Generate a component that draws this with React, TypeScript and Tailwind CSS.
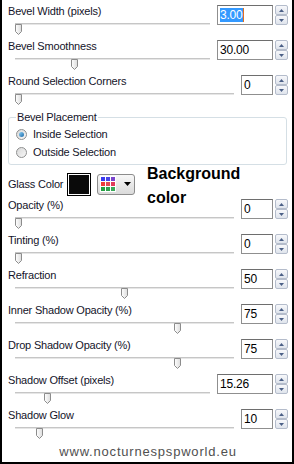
import React from 'react';

type RowProps = {
  label: string;
  value: string;
  frac: number;
  wide?: boolean;
  selected?: boolean;
};

function Thumb() {
  return (
    <svg width="7" height="11" viewBox="0 0 7 11">
      <defs>
        <linearGradient id="thumbFill" x1="0" y1="0" x2="1" y2="0">
          <stop offset="0" stopColor="#ffffff" />
          <stop offset="1" stopColor="#dcdcdc" />
        </linearGradient>
      </defs>
      <path d="M0.5 0.5 H6.5 V7.5 L3.5 10.5 L0.5 7.5 Z" fill="url(#thumbFill)" stroke="#8c8c8c" />
    </svg>
  );
}

function Slider({ frac }: { frac: number }) {
  return (
    <div className="relative ml-[7px] h-[12px]">
      <div className="mt-[5px] h-[2px] bg-[#c6c6c6] border-b border-[#e6e6e6]" />
      <div className="absolute top-[1px]" style={{ left: `calc(${frac} * (100% - 7px))` }}>
        <Thumb />
      </div>
    </div>
  );
}

function SpinArrow({ up }: { up?: boolean }) {
  return (
    <div className="flex-1 flex items-center justify-center rounded-[2px] border border-[#b4bccb] bg-gradient-to-b from-[#f7f8fb] to-[#dfe4ec]">
      <svg width="5" height="3" viewBox="0 0 5 3">
        <path d={up ? 'M0 3 L2.5 0 L5 3 Z' : 'M0 0 L2.5 3 L5 0 Z'} fill="#4a5f86" />
      </svg>
    </div>
  );
}

function SpinBox({ value, wide, selected }: { value: string; wide?: boolean; selected?: boolean }) {
  return (
    <div className="ml-[7px] mt-[1px] flex h-[20px] gap-[2px]">
      <div
        className={`flex items-center border border-[#8f8f8f] border-t-[#6e6e6e] bg-white pl-[2px] text-[12px] text-black ${
          wide ? 'w-[56px]' : 'w-[32px]'
        }`}
      >
        {selected ? (
          <>
            <span className="bg-[#3399ff] text-white leading-[14px]">{value}</span>
            <span className="h-[14px] w-[1px] bg-[#e07020]" />
          </>
        ) : (
          value
        )}
      </div>
      <div className="flex w-[13px] flex-col">
        <SpinArrow up />
        <SpinArrow />
      </div>
    </div>
  );
}

function Row({ label, value, frac, wide, selected }: RowProps) {
  return (
    <div className="flex h-[35px]">
      <div className="min-w-0 flex-1">
        <div className="h-[14px] leading-[14px]">{label}</div>
        <Slider frac={frac} />
      </div>
      <SpinBox value={value} wide={wide} selected={selected} />
    </div>
  );
}

function Radio({ checked, label }: { checked?: boolean; label: string }) {
  return (
    <div className="flex h-[18px] items-center gap-[6px]">
      <div className="flex h-[11px] w-[11px] items-center justify-center rounded-full border border-[#8e8f8f] bg-gradient-to-br from-[#d8d8d8] to-[#f8f8f8]">
        {checked && (
          <div className="h-[5px] w-[5px] rounded-full bg-gradient-to-br from-[#8ad0f5] to-[#1a6aa8]" />
        )}
      </div>
      <span>{label}</span>
    </div>
  );
}

function ColorGrid() {
  const cells = [
    '#3a3af0', '#4a44e6', '#7a44cc',
    '#f03a3a', '#e24a56', '#e03a5a',
    '#24a044', '#2ea24e', '#3aa85a',
  ];
  return (
    <div className="grid grid-cols-3 gap-[1px] bg-white p-[1px]">
      {cells.map((c, i) => (
        <div key={i} className="h-[4px] w-[4px]" style={{ backgroundColor: c }} />
      ))}
    </div>
  );
}

export default function App() {
  return (
    <div className="relative h-[464px] w-[294px] border-x-2 border-b-2 border-black bg-white font-['Liberation_Sans',Arial,sans-serif] text-[11px] tracking-[-0.2px] text-[#14142a]">
      <div className="pl-[6px] pr-[4px] pt-[4px]">
        <Row label="Bevel Width (pixels)" value="3.00" frac={0} wide selected />
        <Row label="Bevel Smoothness" value="30.00" frac={0.3} wide />
        <Row label="Round Selection Corners" value="0" frac={0} />

        {/* Bevel placement group */}
        <fieldset className="mr-[1px] rounded-[3px] border border-[#d5dfe5] pb-[3px] pl-[7px]">
          <legend className="px-[1px] leading-[16px]">Bevel Placement</legend>
          <Radio checked label="Inside Selection" />
          <Radio label="Outside Selection" />
        </fieldset>

        {/* Glass color */}
        <div className="mt-[7px] flex h-[24px] items-center">
          <span className="w-[59px]">Glass Color</span>
          <div className="h-[23px] w-[24px] border border-black bg-black p-0">
            <div className="h-full w-full border border-white bg-[#0a0a0a]" />
          </div>
          <div className="ml-[6px] flex h-[21px] w-[38px] items-center rounded-[3px] border border-[#8c8c8c] bg-gradient-to-b from-[#f8f8f8] to-[#dadada] pl-[2px]">
            <ColorGrid />
            <svg className="ml-[8px]" width="7" height="4" viewBox="0 0 7 4">
              <path d="M0 0 L3.5 4 L7 0 Z" fill="#000" />
            </svg>
          </div>
        </div>

        <div className="mt-[2px]">
          <Row label="Opacity (%)" value="0" frac={0} />
          <Row label="Tinting (%)" value="0" frac={0} />
          <Row label="Refraction" value="50" frac={0.5} />
          <Row label="Inner Shadow Opacity (%)" value="75" frac={0.75} />
          <Row label="Drop Shadow Opacity (%)" value="75" frac={0.75} />
          <Row label="Shadow Offset (pixels)" value="15.26" frac={0.153} wide />
          <Row label="Shadow Glow" value="10" frac={0.1} />
        </div>

        <div className="mt-[1px] text-center text-[13px] leading-[16px] tracking-[0.8px] text-[#505050]">
          www.nocturnespspworld.eu
        </div>
      </div>

      {/* annotation over the dialog */}
      <div className="absolute left-[145px] top-[162px] text-[16px] font-bold leading-[24px] tracking-normal text-black">
        Background
        <br />
        color
      </div>
    </div>
  );
}
